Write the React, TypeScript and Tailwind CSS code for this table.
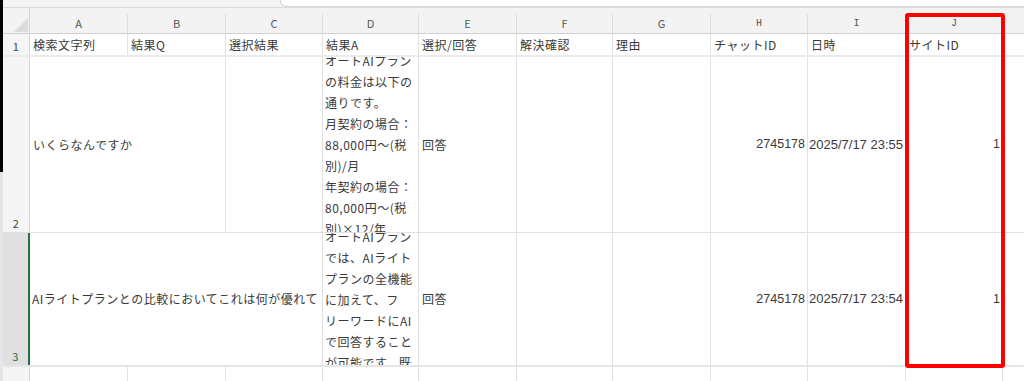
import type { ReactNode } from "react";

type Col = { letter: string; width: string; mono?: boolean; title: string };

const columns: Col[] = [
  { letter: "A", width: "w-[98px]", title: "検索文字列" },
  { letter: "B", width: "w-[98px]", title: "結果Q" },
  { letter: "C", width: "w-[97px]", title: "選択結果" },
  { letter: "D", width: "w-[96px]", title: "結果A" },
  { letter: "E", width: "w-[98px]", title: "選択/回答" },
  { letter: "F", width: "w-[96px]", title: "解決確認" },
  { letter: "G", width: "w-[98px]", title: "理由" },
  { letter: "H", width: "w-[97px]", mono: true, title: "チャットID" },
  { letter: "I", width: "w-[98px]", mono: true, title: "日時" },
  { letter: "J", width: "w-[97px]", mono: true, title: "サイトID" },
];

const answerPrice = [
  "オートAIプラン",
  "の料金は以下の",
  "通りです。",
  "月契約の場合：",
  "88,000円～(税",
  "別)/月",
  "年契約の場合：",
  "80,000円～(税",
  "別)×12/年",
];

const answerCompare = [
  "オートAIプラン",
  "では、AIライト",
  "プランの全機能",
  "に加えて、フ",
  "リーワードにAI",
  "で回答すること",
  "が可能です。既",
];

function Cell({ className = "", children }: { className?: string; children?: ReactNode }) {
  return (
    <div
      className={`shrink-0 h-full border-r border-[#e1e1e1] flex items-center overflow-hidden whitespace-nowrap ${className}`}
    >
      {children}
    </div>
  );
}

function RowHead({ n, active }: { n: number; active?: boolean }) {
  return (
    <div
      className={`shrink-0 w-[27px] h-full flex items-end justify-center pb-[1px] text-[11px] ${
        active
          ? "bg-[#e0e0e0] text-[#217346] border-r-2 border-[#217346]"
          : "bg-[#f5f5f5] text-[#444] border-r border-[#d4d4d4]"
      }`}
    >
      {n}
    </div>
  );
}

function Num({ children, wide }: { children: ReactNode; wide?: boolean }) {
  return (
    <span className={`font-['Liberation_Sans',sans-serif] tracking-normal ${wide ? "text-[13px]" : "text-[12.5px]"}`}>
      {children}
    </span>
  );
}

function Lines({ lines }: { lines: string[] }) {
  return (
    <div className="pl-[2px] leading-[21px]">
      {lines.map((l) => (
        <div key={l}>{l}</div>
      ))}
    </div>
  );
}

export default function App() {
  return (
    <div className="relative w-[1024px] h-[381px] overflow-hidden flex bg-white text-[#3a3a3a] font-['Noto_Sans_CJK_JP',sans-serif] text-[12px] tracking-[0.5px]">
      {/* window edge */}
      <div className="w-[3px] shrink-0 flex flex-col">
        <div className="h-[172px] bg-black" />
        <div className="flex-1 bg-[#e6e6e6]" />
      </div>

      <div className="flex-1 flex flex-col min-w-0">
        {/* formula bar strip */}
        <div className="h-[8px] shrink-0 flex bg-[#f3f3f3] border-b border-[#dadada]">
          <div className="w-[277px] shrink-0" />
          <div className="flex-1 bg-white border-l border-b border-[#d6d6d6] rounded-bl-[6px]" />
        </div>

        {/* column letters */}
        <div className="h-[26px] shrink-0 flex bg-[#f3f3f3] border-b border-[#d0d0d0] tracking-normal">
          <div className="shrink-0 w-[27px] h-full flex items-end justify-end pr-[1px] pb-[1px] border-r border-[#d4d4d4]">
            <svg width="14" height="14" viewBox="0 0 14 14">
              <polygon points="14,0 14,14 0,14" fill="#dcdcdc" />
            </svg>
          </div>
          {columns.map((c) => (
            <div key={c.letter} className={`shrink-0 h-full flex items-end ${c.width}`}>
              <div
                className={`w-full h-[19px] flex items-center justify-center border-r border-[#dcdcdc] text-[#555] ${
                  c.mono ? "font-['Liberation_Mono',monospace] text-[10px]" : "text-[11px]"
                }`}
              >
                {c.letter}
              </div>
            </div>
          ))}
          <div className="flex-1" />
        </div>

        {/* row 1: headings */}
        <div className="h-[23px] shrink-0 flex border-b-2 border-[#ebebeb]">
          <RowHead n={1} />
          {columns.map((c) => (
            <Cell key={c.letter} className={`${c.width} pl-[3px]`}>
              {c.title}
            </Cell>
          ))}
          <div className="flex-1" />
        </div>

        {/* row 2: question spills over the empty B cell */}
        <div className="h-[176px] shrink-0 flex border-b border-[#e1e1e1]">
          <RowHead n={2} />
          <Cell className="w-[196px] pl-[3px]">いくらなんですか</Cell>
          <Cell className="w-[97px]" />
          <Cell className="w-[96px]">
            <Lines lines={answerPrice} />
          </Cell>
          <Cell className="w-[98px] pl-[3px]">回答</Cell>
          <Cell className="w-[96px]" />
          <Cell className="w-[98px]" />
          <Cell className="w-[97px] justify-end pr-[2px]">
            <Num>2745178</Num>
          </Cell>
          <Cell className="w-[98px] justify-end pr-[2px]">
            <Num wide>2025/7/17 23:55</Num>
          </Cell>
          <Cell className="w-[97px] justify-end pr-[2px]">
            <Num>1</Num>
          </Cell>
          <div className="flex-1" />
        </div>

        {/* row 3 (selected) */}
        <div className="h-[134px] shrink-0 flex border-b-2 border-[#e6e6e6]">
          <RowHead n={3} active />
          <Cell className="w-[293px] pl-[2px]">AIライトプランとの比較においてこれは何が優れて</Cell>
          <Cell className="w-[96px]">
            <Lines lines={answerCompare} />
          </Cell>
          <Cell className="w-[98px] pl-[3px]">回答</Cell>
          <Cell className="w-[96px]" />
          <Cell className="w-[98px]" />
          <Cell className="w-[97px] justify-end pr-[2px]">
            <Num>2745178</Num>
          </Cell>
          <Cell className="w-[98px] justify-end pr-[2px]">
            <Num wide>2025/7/17 23:54</Num>
          </Cell>
          <Cell className="w-[97px] justify-end pr-[2px]">
            <Num>1</Num>
          </Cell>
          <div className="flex-1" />
        </div>

        {/* row 4 */}
        <div className="flex-1 flex">
          <div className="shrink-0 w-[27px] h-full bg-[#f5f5f5] border-r border-[#d4d4d4]" />
          {columns.map((c) => (
            <Cell key={c.letter} className={c.width} />
          ))}
          <div className="flex-1" />
        </div>
      </div>

      {/* highlight around column J */}
      <div className="absolute left-[905px] top-[13px] w-[100px] h-[355px] border-4 border-[#ff0000] rounded-[3px] pointer-events-none" />
    </div>
  );
}
